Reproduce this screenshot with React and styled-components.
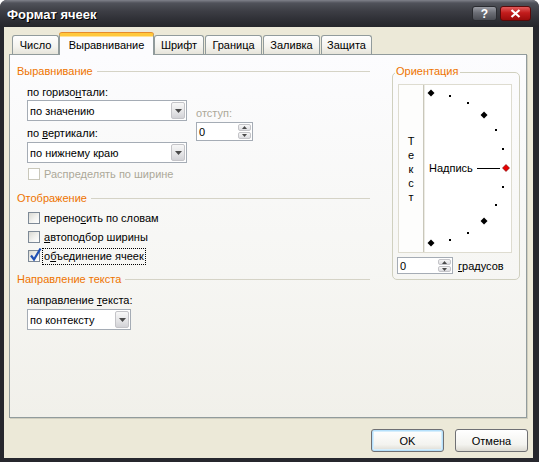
import React from 'react';
import styled, { createGlobalStyle, css } from 'styled-components';

const GlobalStyle = createGlobalStyle`
  html, body { margin: 0; padding: 0; background: #ffffff; }
  body {
    font-family: "Liberation Sans", Arial, sans-serif;
    font-size: 11px;
    color: #000;
  }
  * { box-sizing: border-box; }
`;

const Window = styled.div`
  width: 539px;
  height: 462px;
  display: flex;
  flex-direction: column;
  background: #26272d;
  border-radius: 7px 7px 0 0;
  overflow: hidden;
`;

const TitleBar = styled.div`
  height: 27px;
  flex: none;
  display: flex;
  align-items: center;
  padding: 0 8px 0 7px;
  background: linear-gradient(180deg, #80828b 0px, #50525a 3px, #3d3e45 11px, #2e2f35 20px, #25262b 27px);
`;

const Title = styled.div`
  font-family: "Liberation Sans", Arial, sans-serif;
  font-weight: bold;
  font-size: 13px;
  color: #ffffff;
  text-shadow: 1px 1px 0 #000;
  margin-top: 2px;
`;

const Controls = styled.div`
  margin-left: auto;
  display: flex;
  gap: 3px;
`;

const CaptionButton = styled.div`
  width: ${p => p.$w}px;
  height: 15px;
  border-radius: 3px;
  display: flex;
  align-items: center;
  justify-content: center;
  color: #fff;
  font-weight: bold;
  font-size: 12px;
  border: 1px solid ${p => (p.$danger ? '#5a0a0a' : '#2a2b30')};
  background: ${p =>
    p.$danger
      ? 'linear-gradient(180deg, #e25b5b 0%, #c21c1c 45%, #9c0b0b 100%)'
      : 'linear-gradient(180deg, #9a9ca4 0%, #6b6d75 45%, #4a4c53 100%)'};
`;

const Client = styled.div`
  flex: 1;
  margin: 0 6px 4px 4px;
  background: #ece9d8;
  padding: 6px 6px 6px 5px;
  display: flex;
  flex-direction: column;
`;

const Tabs = styled.div`
  height: 21px;
  display: flex;
  align-items: flex-end;
  gap: 1px;
  padding-left: 3px;
  position: relative;
  z-index: 1;
`;

const Tab = styled.div`
  width: ${p => p.$w}px;
  height: 19px;
  display: flex;
  align-items: center;
  justify-content: center;
  border: 1px solid #919b9c;
  border-bottom: none;
  border-radius: 3px 3px 0 0;
  background: linear-gradient(180deg, #fefefe 0%, #f4f3ee 60%, #e6e4da 100%);
  ${p =>
    p.$active &&
    css`
      height: 22px;
      margin: 0 -1px -1px -1px;
      padding-bottom: 1px;
      border-top: 3px solid #ffc83c;
      box-shadow: inset 0 1px 0 #ffe39a, 0 -1px 0 #e68b2c;
      background: #fcfcfe;
    `}
`;

const Panel = styled.div`
  height: 364px;
  flex: none;
  border: 1px solid #919b9c;
  box-shadow: 1px 1px 0 #d0cebf;
  background: linear-gradient(180deg, #fcfcfe 0%, #f6f6f3 60%, #f1f0ea 100%);
  display: grid;
  grid-template-columns: 353px 128px;
  column-gap: 22px;
  align-items: start;
  padding: 9px 6px 0 7px;
`;

const Column = styled.div`
  display: flex;
  flex-direction: column;
`;

const GroupHeader = styled.div`
  height: 14px;
  display: flex;
  align-items: center;
  margin-top: ${p => p.$mt || 0}px;
  color: #ee7400;
  white-space: nowrap;
  &::after {
    content: '';
    flex: 1;
    height: 1px;
    margin-left: 4px;
    background: #d5d3c6;
  }
`;

const Section = styled.div`
  display: flex;
  flex-direction: column;
  padding-left: 10px;
`;

const AlignGrid = styled.div`
  display: grid;
  grid-template-columns: 160px 57px;
  column-gap: 9px;
  margin-top: 7px;
`;

const FieldLabel = styled.div`
  height: 14px;
  line-height: 14px;
  margin-top: ${p => p.$mt || 0}px;
  color: ${p => (p.$disabled ? '#aca899' : '#000')};
  white-space: nowrap;
`;

const Key = styled.span`
  text-decoration: underline;
`;

const Combo = styled.div`
  width: ${p => p.$w}px;
  height: 21px;
  margin-top: ${p => p.$mt || 0}px;
  border: 1px solid #a5acb5;
  background: #fff;
  display: flex;
  align-items: center;
  padding-left: 2px;
`;

const ComboText = styled.span`
  flex: 1;
  white-space: nowrap;
`;

const ArrowButton = styled.div`
  width: 14px;
  height: 17px;
  margin-right: 1px;
  border: 1px solid #c4c4c8;
  border-radius: 2px;
  background: linear-gradient(180deg, #f7f7f7 0%, #e4e4e6 60%, #d2d2d6 100%);
  display: flex;
  align-items: center;
  justify-content: center;
`;

const IndentCol = styled.div`
  display: flex;
  flex-direction: column;
  padding-top: 21px;
`;

const SpinBox = styled.div`
  width: ${p => p.$w}px;
  height: ${p => p.$h}px;
  margin-top: ${p => p.$mt || 0}px;
  border: 1px solid #a5acb5;
  background: #fff;
  display: flex;
  align-items: stretch;
`;

const SpinValue = styled.div`
  flex: 1;
  display: flex;
  align-items: center;
  padding-left: 2px;
`;

const SpinArrows = styled.div`
  width: 14px;
  display: flex;
  flex-direction: column;
  gap: 1px;
  padding: 1px 1px 1px 0;
`;

const SpinArrow = styled.div`
  flex: 1;
  border: 1px solid #c4c4c8;
  border-radius: 2px;
  background: linear-gradient(180deg, #f7f7f7 0%, #dcdce0 100%);
  display: flex;
  align-items: center;
  justify-content: center;
`;

const CheckRow = styled.div`
  height: 14px;
  display: flex;
  align-items: center;
  gap: 2px;
  padding-left: 1px;
  margin-top: ${p => p.$mt || 0}px;
  color: ${p => (p.$disabled ? '#aca899' : '#000')};
`;

const Box = styled.div`
  width: 12px;
  height: 12px;
  flex: none;
  position: relative;
  border: 1px solid ${p => (p.$disabled ? '#cac8bb' : '#7d8996')};
  background: ${p =>
    p.$disabled ? '#ffffff' : 'linear-gradient(135deg, #d8d8d2 0%, #f2f2ef 55%, #ffffff 100%)'};
`;

const CheckMark = styled.svg`
  position: absolute;
  left: 0px;
  top: -4px;
`;

const CheckLabel = styled.span`
  height: 17px;
  line-height: 15px;
  padding: 0 1px;
  border: 1px ${p => (p.$focus ? 'dotted #000' : 'solid transparent')};
  white-space: nowrap;
`;

const Group = styled.div`
  margin-top: 8px;
  border: 1px solid #d0d0bf;
  border-radius: 5px;
  padding: 0 6px 5px 5px;
  display: flex;
  flex-direction: column;
`;

const Legend = styled.div`
  align-self: flex-start;
  height: 14px;
  line-height: 14px;
  margin: -9px 0 0 -3px;
  padding: 0 2px 0 1px;
  background: #fbfbfb;
  color: #ee7400;
`;

const DialFrame = styled.div`
  margin-top: 6px;
  width: 114px;
  height: 169px;
  border: 1px solid #dedcd0;
  display: flex;
  background: #ffffff;
`;

const VerticalText = styled.div`
  width: 25px;
  border-right: 1px solid #c9c7ba;
  box-shadow: 1px 0 0 #ecebe4;
  background: #fdfdfc;
  display: flex;
  flex-direction: column;
  align-items: center;
  justify-content: center;
  line-height: 14px;
  padding-top: 1px;
`;

const Arc = styled.svg`
  display: block;
  flex: none;
`;

const DegreeRow = styled.div`
  margin-top: 4px;
  margin-left: -1px;
  display: flex;
  align-items: center;
  gap: 5px;
`;

const Footer = styled.div`
  margin-top: 11px;
  margin-right: -1px;
  display: flex;
  justify-content: flex-end;
  gap: 11px;
`;

const Button = styled.div`
  width: 73px;
  height: 23px;
  border: 1px solid #6f7074;
  border-radius: 3px;
  display: flex;
  align-items: center;
  justify-content: center;
  background: linear-gradient(180deg, #ffffff 0%, #f3f3ef 70%, #dcdad2 100%);
  ${p =>
    p.$default &&
    css`
      box-shadow: inset 0 0 0 1px #b5e0fb, inset 0 0 0 2px #d6eefc;
    `}
`;

const Triangle = ({ up, w = 7, h = 4 }) => (
  <svg width={w} height={h} viewBox={`0 0 ${w} ${h}`}>
    <polygon
      points={up ? `0,${h} ${w / 2},0 ${w},${h}` : `0,0 ${w},0 ${w / 2},${h}`}
      fill="#4a4a4a"
    />
  </svg>
);

const Spin = ({ w, h, mt, value }) => (
  <SpinBox $w={w} $h={h} $mt={mt}>
    <SpinValue>{value}</SpinValue>
    <SpinArrows>
      <SpinArrow>
        <Triangle up w={5} h={3} />
      </SpinArrow>
      <SpinArrow>
        <Triangle w={5} h={3} />
      </SpinArrow>
    </SpinArrows>
  </SpinBox>
);

const Select = ({ w, mt, value }) => (
  <Combo $w={w} $mt={mt}>
    <ComboText>{value}</ComboText>
    <ArrowButton>
      <Triangle />
    </ArrowButton>
  </Combo>
);

const Check = ({ checked, disabled, focus, mt, children }) => (
  <CheckRow $mt={mt} $disabled={disabled}>
    <Box $disabled={disabled}>
      {checked && (
        <CheckMark width="13" height="15" viewBox="0 0 13 15">
          <path d="M2 8.5 L5 12.5 L11.5 1.5" fill="none" stroke="#1f4fb4" strokeWidth="2.2" />
        </CheckMark>
      )}
    </Box>
    <CheckLabel $focus={focus}>{children}</CheckLabel>
  </CheckRow>
);

const Dial = () => {
  const cx = 7;
  const cy = 83;
  const r = 75;
  const marks = [];
  for (let a = 0; a <= 180; a += 15) {
    const t = (a * Math.PI) / 180;
    const x = cx + r * Math.sin(t);
    const y = cy - r * Math.cos(t);
    if (a % 45 === 0) {
      const s = 3.5;
      marks.push(
        <polygon
          key={a}
          points={`${x},${y - s} ${x + s},${y} ${x},${y + s} ${x - s},${y}`}
          fill={a === 90 ? '#e80000' : '#000'}
          stroke={a === 90 ? '#700000' : 'none'}
          strokeWidth="0.6"
        />
      );
    } else {
      marks.push(
        <rect key={a} x={Math.round(x) - 1} y={Math.round(y) - 1} width="2" height="2" fill="#000" />
      );
    }
  }
  return (
    <Arc width="86" height="167" viewBox="0 0 86 167">
      <text
        x="5"
        y={cy + 4}
        fontFamily='"Liberation Sans", Arial, sans-serif'
        fontSize="11"
        fill="#000"
      >
        Надпись
      </text>
      <line x1="53" y1={cy + 0.5} x2="76" y2={cy + 0.5} stroke="#000" strokeWidth="1" />
      {marks}
    </Arc>
  );
};

const tabs = [
  { label: 'Число', w: 47 },
  { label: 'Выравнивание', w: 95, active: true },
  { label: 'Шрифт', w: 50 },
  { label: 'Граница', w: 57 },
  { label: 'Заливка', w: 57 },
  { label: 'Защита', w: 51 },
];

export default function App() {
  return (
    <>
      <GlobalStyle />
      <Window>
        <TitleBar>
          <Title>Формат ячеек</Title>
          <Controls>
            <CaptionButton $w={25}>?</CaptionButton>
            <CaptionButton $w={31} $danger>
              <svg width="11" height="9" viewBox="0 0 11 9">
                <path d="M1.5 1 L9.5 8 M9.5 1 L1.5 8" stroke="#fff" strokeWidth="2.2" />
              </svg>
            </CaptionButton>
          </Controls>
        </TitleBar>
        <Client>
          <Tabs>
            {tabs.map(t => (
              <Tab key={t.label} $w={t.w} $active={t.active}>
                {t.label}
              </Tab>
            ))}
          </Tabs>
          <Panel>
            <Column>
              <GroupHeader>Выравнивание</GroupHeader>
              <Section>
                <AlignGrid>
                  <Column>
                    <FieldLabel>
                      по горизо<Key>н</Key>тали:
                    </FieldLabel>
                    <Select w={160} mt={1} value="по значению" />
                    <FieldLabel $mt={5}>
                      по <Key>в</Key>ертикали:
                    </FieldLabel>
                    <Select w={160} mt={2} value="по нижнему краю" />
                  </Column>
                  <IndentCol>
                    <FieldLabel $disabled>отступ:</FieldLabel>
                    <Spin w={57} h={19} mt={2} value="0" />
                  </IndentCol>
                </AlignGrid>
                <Check disabled mt={4}>
                  Распределять по ширине
                </Check>
              </Section>

              <GroupHeader $mt={10}>Отображение</GroupHeader>
              <Section>
                <Check mt={6}>
                  перено<Key>с</Key>ить по словам
                </Check>
                <Check mt={5}>
                  <Key>а</Key>втоподбор ширины
                </Check>
                <Check mt={5} checked focus>
                  о<Key>б</Key>ъединение ячеек
                </Check>
              </Section>

              <GroupHeader $mt={9}>Направление текста</GroupHeader>
              <Section>
                <FieldLabel $mt={7}>
                  направление <Key>т</Key>екста:
                </FieldLabel>
                <Select w={104} mt={2} value="по контексту" />
              </Section>
            </Column>

            <Group>
              <Legend>Ориентация</Legend>
              <DialFrame>
                <VerticalText>
                  {'Текст'.split('').map((c, i) => (
                    <span key={i}>{c}</span>
                  ))}
                </VerticalText>
                <Dial />
              </DialFrame>
              <DegreeRow>
                <Spin w={56} h={17} value="0" />
                <span>
                  <Key>г</Key>радусов
                </span>
              </DegreeRow>
            </Group>
          </Panel>
          <Footer>
            <Button $default>OK</Button>
            <Button>Отмена</Button>
          </Footer>
        </Client>
      </Window>
    </>
  );
}
